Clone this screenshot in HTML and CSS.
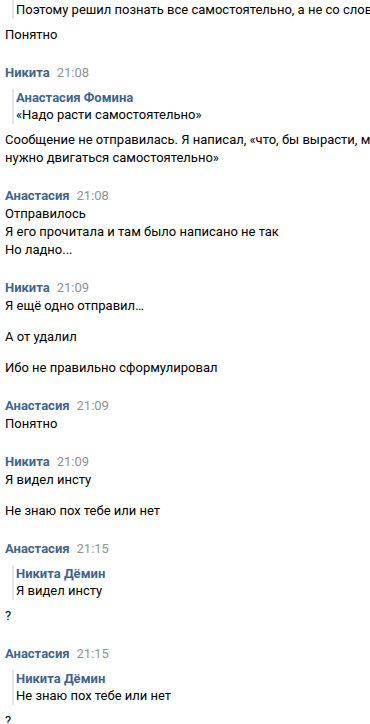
FILE: index.html
```html
<!DOCTYPE html>
<html lang="ru">
<head>
  <meta charset="UTF-8" />
  <meta name="viewport" content="width=device-width, initial-scale=1.0" />
  <title>Сообщения</title>
  <link rel="stylesheet" href="styles.css">
</head>
<body>
  <div class="history">

    <div class="group first">
      <div class="fwd top">
        <div class="fwd-text">Поэтому решил познать все самостоятельно, а не со слов других</div>
      </div>
      <div class="msg">Понятно</div>
    </div>

    <div class="group">
      <div class="head"><span class="name">Никита</span><span class="time">21:08</span></div>
      <div class="fwd">
        <div class="fwd-name">Анастасия Фомина</div>
        <div class="fwd-text">«Надо расти самостоятельно»</div>
      </div>
      <div class="msg">Сообщение не отправилась. Я написал, «что, бы вырасти, мне<br>нужно двигаться самостоятельно»</div>
    </div>

    <div class="group">
      <div class="head"><span class="name">Анастасия</span><span class="time">21:08</span></div>
      <div class="msg">Отправилось<br>Я его прочитала и там было написано не так<br>Но ладно...</div>
    </div>

    <div class="group">
      <div class="head"><span class="name">Никита</span><span class="time">21:09</span></div>
      <div class="msg">Я ещё одно отправил…</div>
      <div class="msg">А от удалил</div>
      <div class="msg">Ибо не правильно сформулировал</div>
    </div>

    <div class="group">
      <div class="head"><span class="name">Анастасия</span><span class="time">21:09</span></div>
      <div class="msg">Понятно</div>
    </div>

    <div class="group">
      <div class="head"><span class="name">Никита</span><span class="time">21:09</span></div>
      <div class="msg">Я видел инсту</div>
      <div class="msg">Не знаю пох тебе или нет</div>
    </div>

    <div class="group">
      <div class="head"><span class="name">Анастасия</span><span class="time">21:15</span></div>
      <div class="fwd">
        <div class="fwd-name">Никита Дёмин</div>
        <div class="fwd-text">Я видел инсту</div>
      </div>
      <div class="msg">?</div>
    </div>

    <div class="group">
      <div class="head"><span class="name">Анастасия</span><span class="time">21:15</span></div>
      <div class="fwd">
        <div class="fwd-name">Никита Дёмин</div>
        <div class="fwd-text">Не знаю пох тебе или нет</div>
      </div>
      <div class="msg">?</div>
    </div>

  </div>
</body>
</html>
```

FILE: styles.css
```css
* {
  box-sizing: border-box;
}

html, body {
  overflow: hidden;
}

body {
  margin: 0;
  background: #fff;
  color: #000;
  font-family: Roboto, 'Open Sans', Arial, sans-serif;
  font-size: 13px;
  line-height: 18px;
}

.history {
  width: 420px;
  padding: 0 0 0 5px;
}

.group {
  display: flex;
  flex-direction: column;
  gap: 13px;
  margin-bottom: 20px;
}

.head {
  margin-bottom: -13px;
}

.name {
  color: #42648b;
  font-weight: 700;
}

.time {
  color: #939393;
  margin-left: 7px;
}

.msg {
  white-space: nowrap;
}

.fwd {
  margin: 7px 0 -6px 7px;
  border-left: 2px solid #dfe4ea;
  padding-left: 2px;
}

.fwd.top {
  margin-top: 0;
  padding-top: 1px;
}

.fwd-name {
  color: #42648b;
  font-weight: 700;
  line-height: 17px;
}

.fwd-text {
  white-space: nowrap;
}
```
